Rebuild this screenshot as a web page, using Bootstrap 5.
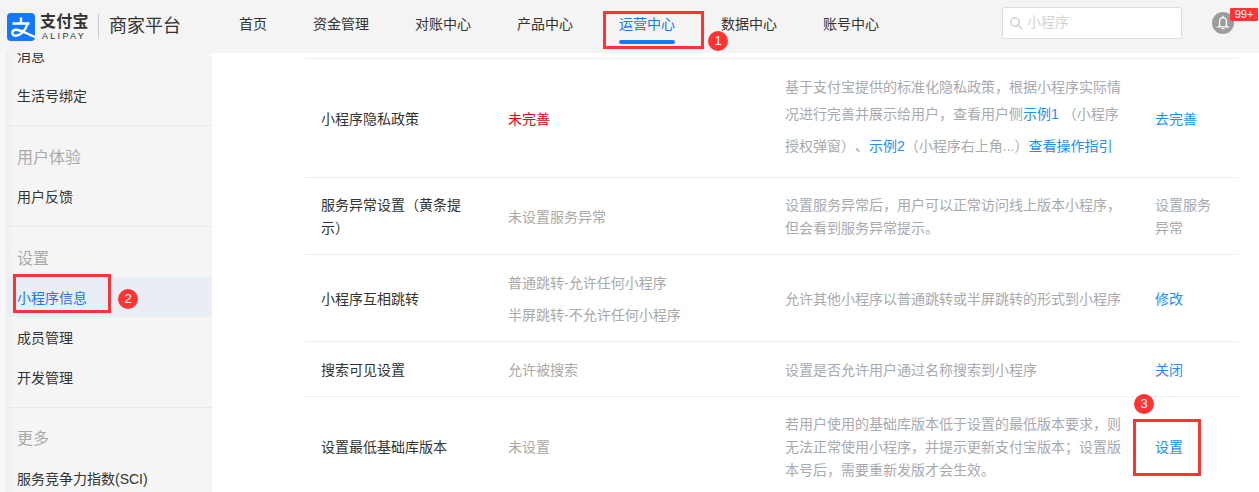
<!DOCTYPE html>
<html lang="zh-CN">
<head>
    <meta charset="UTF-8">
    <meta name="viewport" content="width=device-width, initial-scale=1.0">
    <title>小程序信息 - 商家平台</title>
    <link href="https://cdn.jsdelivr.net/npm/bootstrap@5.3.0/dist/css/bootstrap.min.css" rel="stylesheet">
    <style>
        html, body { height: 492px; overflow: hidden; }
        body {
            position: relative;
            font-family: "Liberation Sans", "Noto Sans CJK SC", sans-serif;
            font-size: 14px;
            color: #333;
            background: #fff;
            text-spacing-trim: space-all;
        }
        a { text-decoration: none; color: #1890ff; }

        /* header */
        .top-bar { height: 53px; background: #f4f4f4; padding-left: 7px; }
        .logo-mark { width: 28px; height: 28px; flex: none; display: block; }
        .logo-words { margin-left: 5px; width: 50px; }
        .logo-cn { font-size: 16px; font-weight: 700; line-height: 16px; color: #333; letter-spacing: .3px; }
        .logo-en { font-size: 9px; line-height: 8px; letter-spacing: 2.3px; color: #333; margin-top: 2px; padding-left: 2px; white-space: nowrap; }
        .logo-split { width: 1px; height: 25px; background: #ccc; margin: 0 10px 0 8px; }
        .logo-title { font-size: 18px; color: #333; width: 72px; white-space: nowrap; }
        .main-nav { margin-left: 58px; gap: 46px; height: 53px; }
        .main-nav a { color: #333; line-height: 48px; position: relative; display: block; }
        .main-nav a.on { color: #1677ff; }
        .main-nav a.on::after {
            content: ""; position: absolute; left: 0; right: 0; top: 40px; height: 4px;
            background: #1677ff; border-radius: 2px;
        }
        .search-box {
            width: 180px; height: 32px; margin-left: 123px; margin-top: -8px;
            background: #fff; border: 1px solid #ddd; border-radius: 2px;
            padding-left: 6px; color: #d4d4d4; gap: 4px;
        }
        .bell-wrap { width: 22px; height: 22px; margin-left: 30px; position: relative; margin-top: -8px; }
        .bell-dot { width: 22px; height: 22px; border-radius: 50%; background: #9c9c9c; }
        .bell-count {
            position: absolute; left: 18px; top: -4px; width: 28px; height: 13px;
            background: #f33; color: #fff; font-size: 11px; line-height: 13px; text-align: center; border-radius: 1px;
        }

        /* sidebar */
        .page-body { height: 439px; }
        .side-menu {
            width: 212px; flex: none; height: 439px; overflow: hidden; padding-left: 7px;
            background: linear-gradient(90deg, #f8f8f8 0, #f8f8f8 5px, #eee 7px, #f5f5f5 13px);
        }
        .side-group { border-bottom: 1px solid #e8e8e8; padding-bottom: 9px; }
        .side-group:first-child { margin-top: -17px; }
        .side-group:last-child { border-bottom: 0; }
        .side-title { font-size: 16px; color: #aaa; height: 51px; padding: 20px 0 0 10px; line-height: 24px; }
        .side-group:last-child .side-title { padding-top: 19px; }
        .side-link { display: block; height: 40px; line-height: 40px; padding-left: 10px; color: #333; border-radius: 4px; white-space: nowrap; }
        .side-link.on { color: #1677ff; background: #e9eef6; margin: -1px 0 1px; padding-top: 1px; box-sizing: border-box; }

        /* settings table */
        .info-wrap { padding: 5px 0 0 93px; }
        .info-table { width: 933px; table-layout: fixed; margin: 0; border-top: 1px solid #eee; }
        .info-table td {
            padding: 2px 0 0; vertical-align: middle; border-bottom: 1px solid #eee;
            color: #333; box-shadow: none; background: transparent;
        }
        .col-name { width: 203px; }
        .col-state { width: 277px; }
        .col-desc { width: 370px; }
        .info-table td.cell-name { padding: 2px 40px 0 16px; line-height: 23px; }
        .info-table td.cell-state { color: #a9a9a9; }
        .info-table td.cell-state.warn { color: #e60012; }
        .info-table td.cell-desc { color: #a9a9b1; line-height: 23px; padding-right: 30px; }
        .info-table td.cell-act { color: #a9a9b1; line-height: 23px; padding-right: 24px; }
        .state-line { display: block; line-height: 32px; }
        .desc-line { display: block; white-space: nowrap; line-height: 27px; }
        .desc-line.tall { line-height: 37px; }
        .row-a { height: 119px; }
        .row-b { height: 77px; }
        .row-c { height: 87px; }
        .row-d { height: 55px; }
        .row-e { height: 100px; }

        /* red markers drawn over the screenshot */
        .mark-box { position: absolute; border: 3px solid #f33; }
        .mark-num {
            position: absolute; width: 20px; height: 20px; border-radius: 50%;
            background: #f33; color: #fff; font-size: 13px; line-height: 20px; text-align: center;
        }
        .box-1 { left: 603px; top: 11px; width: 101px; height: 38px; }
        .box-2 { left: 13px; top: 274px; width: 98px; height: 39px; }
        .box-3 { left: 1133px; top: 419px; width: 68px; height: 57px; }
        .num-1 { left: 708px; top: 31px; }
        .num-2 { left: 118px; top: 289px; }
        .num-3 { left: 1134px; top: 394px; }
    </style>
</head>
<body>

    <!-- Header -->
    <header class="top-bar d-flex align-items-center">
        <svg class="logo-mark" viewBox="0 0 28 28" fill="none" stroke="#fff" stroke-width="2.4">
            <rect width="28" height="28" rx="4" fill="#1677ff" stroke="none"/>
            <path d="M14 4.500V11M5.500 10.500H22.500"/>
            <path d="M20.500 11C18.500 18 12.500 23 8.500 22.800C3.800 22.500 4.500 16.800 9 16.800C14 16.800 20 20.800 28 24"/>
        </svg>
        <div class="logo-words">
            <div class="logo-cn">支付宝</div>
            <div class="logo-en">ALIPAY</div>
        </div>
        <div class="logo-split"></div>
        <div class="logo-title">商家平台</div>
        <nav class="main-nav d-flex">
            <a href="#">首页</a>
            <a href="#">资金管理</a>
            <a href="#">对账中心</a>
            <a href="#">产品中心</a>
            <a href="#" class="on">运营中心</a>
            <a href="#">数据中心</a>
            <a href="#">账号中心</a>
        </nav>
        <div class="search-box d-flex align-items-center">
            <svg width="14" height="14" viewBox="0 0 14 14" fill="none" stroke="#d0d0d0" stroke-width="1.5"><circle cx="6" cy="6" r="4.2"/><path d="M9 9l4 4"/></svg>
            <span>小程序</span>
        </div>
        <div class="bell-wrap">
            <div class="bell-dot d-flex align-items-center justify-content-center">
                <svg width="14" height="15" viewBox="0 0 14 15" fill="none" stroke="#fff" stroke-width="1.300"><path d="M7 .8V2.400M3.600 10.800V6.500C3.600 4.300 5 2.600 7 2.600S10.400 4.300 10.400 6.500V10.800L11.800 11.800H2.200Z"/><path d="M5.500 13.600H8.500"/></svg>
            </div>
            <span class="bell-count">99+</span>
        </div>
    </header>

    <div class="page-body d-flex">
        <!-- Sidebar -->
        <aside class="side-menu">
            <div class="side-group">
                <a href="#" class="side-link">消息</a>
                <a href="#" class="side-link">生活号绑定</a>
            </div>
            <div class="side-group">
                <div class="side-title">用户体验</div>
                <a href="#" class="side-link">用户反馈</a>
            </div>
            <div class="side-group">
                <div class="side-title">设置</div>
                <a href="#" class="side-link on">小程序信息</a>
                <a href="#" class="side-link">成员管理</a>
                <a href="#" class="side-link">开发管理</a>
            </div>
            <div class="side-group">
                <div class="side-title">更多</div>
                <a href="#" class="side-link">服务竞争力指数(SCI)</a>
            </div>
        </aside>

        <!-- Content -->
        <main class="info-wrap flex-grow-1">
            <table class="table info-table">
                <colgroup>
                    <col class="col-name"><col class="col-state"><col class="col-desc"><col>
                </colgroup>
                <tbody>
                    <tr class="row-a">
                        <td class="cell-name">小程序隐私政策</td>
                        <td class="cell-state warn">未完善</td>
                        <td class="cell-desc">
                            <span class="desc-line">基于支付宝提供的标准化隐私政策，根据小程序实际情</span>
                            <span class="desc-line">况进行完善并展示给用户，查看用户侧<a href="#">示例1</a> （小程序</span>
                            <span class="desc-line tall">授权弹窗）、<a href="#">示例2</a>（小程序右上角...）<a href="#">查看操作指引</a></span>
                        </td>
                        <td class="cell-act"><a href="#">去完善</a></td>
                    </tr>
                    <tr class="row-b">
                        <td class="cell-name">服务异常设置（黄条提示）</td>
                        <td class="cell-state">未设置服务异常</td>
                        <td class="cell-desc">设置服务异常后，用户可以正常访问线上版本小程序，但会看到服务异常提示。</td>
                        <td class="cell-act">设置服务异常</td>
                    </tr>
                    <tr class="row-c">
                        <td class="cell-name">小程序互相跳转</td>
                        <td class="cell-state">
                            <span class="state-line">普通跳转-允许任何小程序</span>
                            <span class="state-line">半屏跳转-不允许任何小程序</span>
                        </td>
                        <td class="cell-desc">允许其他小程序以普通跳转或半屏跳转的形式到小程序</td>
                        <td class="cell-act"><a href="#">修改</a></td>
                    </tr>
                    <tr class="row-d">
                        <td class="cell-name">搜索可见设置</td>
                        <td class="cell-state">允许被搜索</td>
                        <td class="cell-desc">设置是否允许用户通过名称搜索到小程序</td>
                        <td class="cell-act"><a href="#">关闭</a></td>
                    </tr>
                    <tr class="row-e">
                        <td class="cell-name">设置最低基础库版本</td>
                        <td class="cell-state">未设置</td>
                        <td class="cell-desc">若用户使用的基础库版本低于设置的最低版本要求，则无法正常使用小程序，并提示更新支付宝版本；设置版本号后，需要重新发版才会生效。</td>
                        <td class="cell-act"><a href="#">设置</a></td>
                    </tr>
                </tbody>
            </table>
        </main>
    </div>

    <!-- Red markers -->
    <div class="mark-box box-1"></div>
    <div class="mark-num num-1">1</div>
    <div class="mark-box box-2"></div>
    <div class="mark-num num-2">2</div>
    <div class="mark-box box-3"></div>
    <div class="mark-num num-3">3</div>

    <script src="https://cdn.jsdelivr.net/npm/bootstrap@5.3.0/dist/js/bootstrap.bundle.min.js"></script>
</body>
</html>
